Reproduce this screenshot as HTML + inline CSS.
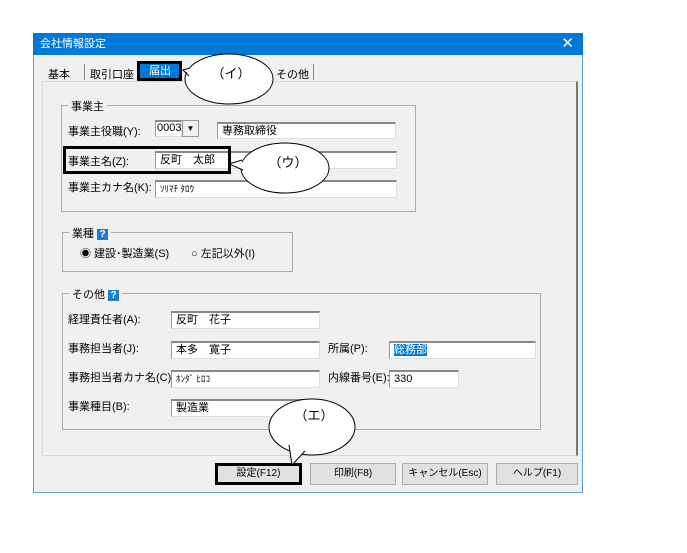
<!DOCTYPE html>
<html><head><meta charset="utf-8"><style>
body{margin:0;width:687px;height:553px;background:#fff;position:relative;overflow:hidden;font-family:"Liberation Sans","Noto Sans CJK JP",sans-serif;font-size:11px;color:#000}
.a{position:absolute}
.fld{position:absolute;background:#fff;border-top:2px solid #888;border-left:1px solid #999;border-right:1px solid #ddd;border-bottom:1px solid #ddd;box-sizing:border-box;padding:1px 4px;font-size:11px;line-height:13px}
.grp{position:absolute;border:1px solid #aaa;box-sizing:border-box}
.lg{position:absolute;background:#f0f0f0;padding:0 3px;top:-8px;left:6px;font-size:11px}
.q{display:inline-block;width:11px;height:11px;background:#1a7fd0;color:#fff;font-weight:bold;font-size:10px;line-height:11px;text-align:center;vertical-align:middle;margin-left:3px}
.btn{position:absolute;top:463px;height:22px;border:1px solid #adadad;background:#e1e1e1;box-sizing:border-box;text-align:center;line-height:20px;font-size:10px}
.lb{position:absolute;font-size:11px}
</style></head><body>
<div class="a" style="left:33px;top:33px;width:550px;height:460px;background:#f0f0f0;border:1px solid #5a9fdd;box-sizing:border-box"></div>
<div class="a" style="left:33px;top:33px;width:550px;height:22px;background:#0078d7;color:#fff;font-size:11px;line-height:22px;padding-left:7px;box-sizing:border-box">会社情報設定<span style="position:absolute;right:9px;top:0;font-size:15px">✕</span></div>
<div class="a" style="left:42px;top:81px;width:536px;height:375px;border:1px solid #d9d9d9;border-right:2px solid #777;box-sizing:border-box"></div>
<div class="lb" style="left:48px;top:66px">基本</div>
<div class="a" style="left:84px;top:64px;width:1px;height:16px;background:#888"></div>
<div class="lb" style="left:90px;top:66px">取引口座</div>
<div class="a" style="left:137px;top:61px;width:45px;height:20px;background:#0078d7;border:3px solid #000;box-sizing:border-box;color:#fff;font-size:11px;line-height:14px;padding-left:9px">届出</div>
<div class="lb" style="left:276px;top:66px">その他</div>
<div class="a" style="left:313px;top:64px;width:1px;height:16px;background:#888"></div>
<div class="grp" style="left:61px;top:105px;width:355px;height:107px"><span class="lg">事業主</span></div>
<div class="lb" style="left:68px;top:123px">事業主役職(Y):</div>
<div class="fld" style="left:155px;top:120px;width:27px;height:17px;padding:0 1px">0003</div>
<div class="a" style="left:182px;top:120px;width:17px;height:17px;border:1px solid #999;box-sizing:border-box;background:#f0f0f0;font-size:8px;text-align:center;line-height:15px">▼</div>
<div class="fld" style="left:217px;top:122px;width:179px;height:17px">専務取締役</div>
<div class="lb" style="left:68px;top:153px">事業主名(Z):</div>
<div class="fld" style="left:155px;top:151px;width:242px;height:18px">反町　太郎</div>
<div class="a" style="left:63px;top:146px;width:168px;height:28px;border:3px solid #000;box-sizing:border-box"></div>
<div class="lb" style="left:68px;top:179px">事業主カナ名(K):</div>
<div class="fld" style="left:155px;top:180px;width:242px;height:18px;font-size:9px">ｿﾘﾏﾁ ﾀﾛｳ</div>
<div class="grp" style="left:62px;top:232px;width:231px;height:40px"><span class="lg">業種<span class="q">?</span></span></div>
<div class="lb" style="left:80px;top:245px">◉ 建設･製造業(S)</div>
<div class="lb" style="left:191px;top:245px">○ 左記以外(I)</div>
<div class="grp" style="left:62px;top:293px;width:479px;height:137px"><span class="lg">その他<span class="q">?</span></span></div>
<div class="lb" style="left:68px;top:311px">経理責任者(A):</div>
<div class="fld" style="left:171px;top:311px;width:149px;height:18px">反町　花子</div>
<div class="lb" style="left:68px;top:340px">事務担当者(J):</div>
<div class="fld" style="left:171px;top:341px;width:149px;height:18px">本多　寛子</div>
<div class="lb" style="left:328px;top:340px">所属(P):</div>
<div class="fld" style="left:389px;top:341px;width:147px;height:18px"><span style="background:#0078d7;color:#fff">総務部</span></div>
<div class="lb" style="left:68px;top:369px">事務担当者カナ名(C):</div>
<div class="fld" style="left:171px;top:370px;width:149px;height:18px;font-size:9px">ﾎﾝﾀﾞ ﾋﾛｺ</div>
<div class="lb" style="left:328px;top:369px">内線番号(E):</div>
<div class="fld" style="left:389px;top:370px;width:70px;height:18px">330</div>
<div class="lb" style="left:68px;top:398px">事業種目(B):</div>
<div class="fld" style="left:171px;top:399px;width:149px;height:18px">製造業</div>
<div class="btn" style="left:215px;width:87px;border:3px solid #000;line-height:16px">設定(F12)</div>
<div class="btn" style="left:310px;width:86px">印刷(F8)</div>
<div class="btn" style="left:402px;width:86px">キャンセル(Esc)</div>
<div class="btn" style="left:496px;width:82px">ヘルプ(F1)</div>
<svg class="a" style="left:0;top:0" width="687" height="553">
<g fill="#fff" stroke="#000" stroke-width="1">
<ellipse cx="229" cy="79" rx="44" ry="25"/>
<ellipse cx="285" cy="168" rx="44" ry="25"/>
<ellipse cx="312" cy="427" rx="43" ry="28"/>
</g>
<g fill="#fff" stroke="none">
<polygon points="188,73 183,70 188,68 192,70 192,76"/>
<polygon points="244,162 229,164 244,170 248,170 248,160"/>
<polygon points="290,447 292,465 304,453 303,448"/>
</g>
<g fill="none" stroke="#000" stroke-width="1">
<polyline points="190,68 183,70 189,76"/>
<polyline points="242,160 229,164 243,170"/>
<polyline points="289,445 292,465 305,451"/>
</g>
<g font-size="13" font-family="Liberation Sans,Noto Sans CJK JP,sans-serif" text-anchor="middle">
<text x="231" y="78">（イ）</text>
<text x="288" y="167">（ウ）</text>
<text x="314" y="420">（エ）</text>
</g>
</svg>
</body></html>
